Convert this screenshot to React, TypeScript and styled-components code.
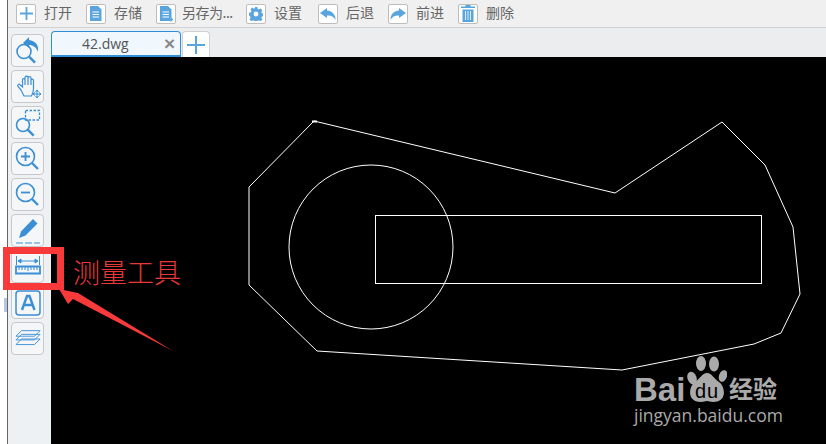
import React from "react";
import styled, { createGlobalStyle } from "styled-components";

const GlobalStyle = createGlobalStyle`
  html, body {
    margin: 0;
    padding: 0;
    background: #fff;
    font-family: "Noto Sans CJK SC", "Liberation Sans", sans-serif;
  }
`;

const BLUE = "#5aa5de";
const SIDE = "#3b8fd6";

const PlusIcon = () => (
  <svg width="13" height="13" viewBox="0 0 13 13">
    <path d="M6.500 0v13M0 6.500h13" stroke={BLUE} strokeWidth="1.800" />
  </svg>
);
const SaveIcon = ({ extra }: { extra?: boolean }) => (
  <svg width="14" height="16" viewBox="0 0 14 16">
    <path d="M1 0h8l3.500 3.500V15H1z" fill={BLUE} />
    <path d="M3.500 6h6.500M3.500 8.500h6.500M3.500 11h6.500" stroke="#fff" strokeWidth="1.200" />
    {extra && <path d="M8 13.500h5.500M11.500 11.500l2 2-2 2" stroke={BLUE} strokeWidth="1.200" fill="#fff" />}
  </svg>
);
const GearIcon = () => (
  <svg width="14" height="14" viewBox="0 0 16 16">
    <path
      d="M6.500 0h3l.4 2.200 1.500.7 1.900-1.200 2 2-1.200 1.900.7 1.500 2.200.4v3l-2.200.4-.7 1.500 1.200 1.900-2 2-1.900-1.200-1.500.7-.4 2.200h-3l-.4-2.200-1.500-.7-1.900 1.200-2-2 1.200-1.900-.7-1.500L0 9.500v-3l2.200-.4.7-1.500L1.700 2.700l2-2 1.900 1.200 1.500-.7z"
      fill={BLUE}
    />
    <circle cx="8" cy="8" r="2.800" fill="#fff" />
  </svg>
);
const BackIcon = ({ flip }: { flip?: boolean }) => (
  <svg width="16" height="12" viewBox="0 0 16 12" style={flip ? { transform: "scaleX(-1)" } : undefined}>
    <path d="M7 0L0 5l7 5V7.500c4-.3 6.500 1 8.500 4.500C15.500 6.500 12.500 3 7 2.500z" fill={BLUE} />
  </svg>
);
const TrashIcon = () => (
  <svg width="14" height="17" viewBox="0 0 14 17">
    <path d="M4.500 0h5v1.500H14V3H0V1.500h4.500z" fill={BLUE} />
    <path d="M1.500 4.500h11V17h-11z" fill={BLUE} />
    <path d="M4.500 6v9M7 6v9M9.500 6v9" stroke="#dcecf8" strokeWidth="1" />
  </svg>
);

const Lens = ({ cx = 11, cy = 15, r = 7 }: { cx?: number; cy?: number; r?: number }) => (
  <>
    <circle cx={cx} cy={cy} r={r} fill="none" stroke={SIDE} strokeWidth="1.600" />
    <path d={`M${cx + r * 0.72} ${cy + r * 0.72}l6 6`} stroke={SIDE} strokeWidth="2.400" />
  </>
);

const sideIcons = [
  <svg width="28" height="28" viewBox="0 0 28 28" key="reset">
    <Lens cx={10} cy={14.500} r={7} />
    <path d="M15 0L9 6l6 5V8c4 0 7 2 9 7 1-8-3-11-9-12z" fill={SIDE} />
  </svg>,
  <svg width="28" height="28" viewBox="0 0 28 28" key="pan">
    <path
      d="M7 17L4 13.500c-1-1.500.8-3 2-1.800L8.500 14V7c0-1.800 2.500-1.800 2.500 0v5V4.500c0-1.800 3-1.800 3 0V12V5c0-1.800 3-1.800 3 0v7V7.500c0-1.800 2.500-1.800 2.500 0V16c0 3-1 5-2 7H10z"
      fill="none"
      stroke={SIDE}
      strokeWidth="1.200"
    />
    <path d="M19 21h8M23 17v8M21 19.500L19 21l2 1.500M25 19.500l2 1.500-2 1.500M21.500 19l1.500-2 1.500 2M21.500 23l1.500 2 1.500-2" fill="none" stroke={SIDE} strokeWidth="1" />
  </svg>,
  <svg width="28" height="28" viewBox="0 0 28 28" key="window">
    <Lens cx={9} cy={16} r={6.500} />
    <rect x="11.500" y="1.500" width="14" height="9.500" fill="none" stroke={SIDE} strokeWidth="1.300" strokeDasharray="2.500 1.500" />
  </svg>,
  <svg width="28" height="28" viewBox="0 0 28 28" key="in">
    <Lens cx={11.500} cy={11.500} r={9} />
    <path d="M7 11.500h9M11.500 7v9" stroke={SIDE} strokeWidth="1.800" />
  </svg>,
  <svg width="28" height="28" viewBox="0 0 28 28" key="out">
    <Lens cx={11.500} cy={11.500} r={9} />
    <path d="M7 11.500h9" stroke={SIDE} strokeWidth="1.800" />
  </svg>,
  <svg width="28" height="28" viewBox="0 0 28 28" key="pen">
    <path d="M19 2l4.500 4.500-12 12L5 21l2-6.500z" fill={SIDE} />
    <path d="M2 26h7M11 26h7M20 26h6" stroke={SIDE} strokeWidth="1.200" />
  </svg>,
  <svg width="26" height="24" viewBox="0 0 26 24" key="ruler">
    <path d="M1.500 1v9M24.500 1v9M3 6h20M3 6l3-2v4zM23 6l-3-2v4z" fill={SIDE} stroke={SIDE} strokeWidth="1" />
    <path d="M1 11.500h24v7H1z" fill="none" stroke={SIDE} strokeWidth="1.800" />
    <path d="M4 12v3M7 12v3M10 12v3M13 12v4M16 12v3M19 12v3M22 12v3" stroke={SIDE} strokeWidth="1" />
  </svg>,
  <svg width="26" height="26" viewBox="0 0 26 26" key="text">
    <rect x="1" y="1" width="24" height="24" rx="3" fill="none" stroke={SIDE} strokeWidth="1.500" />
    <path d="M7 20l5-14h2.500L19.500 20M9 15h8" fill="none" stroke={SIDE} strokeWidth="2.400" />
  </svg>,
  <svg width="26" height="24" viewBox="0 0 28 24" key="layers">
    <path d="M7 3h20l-6 6H1z" fill="none" stroke={SIDE} strokeWidth="1" />
    <path d="M7 7h20l-6 6H1z" fill="none" stroke={SIDE} strokeWidth="1" />
    <path d="M7 12h20l-6 6H1z" fill="none" stroke={SIDE} strokeWidth="1" />
  </svg>,
];

const tools = [
  { icon: <PlusIcon />, label: "打开", width: 56 },
  { icon: <SaveIcon />, label: "存储", width: 56 },
  { icon: <SaveIcon extra />, label: "另存为...", width: 76, tight: true },
  { icon: <GearIcon />, label: "设置", width: 58 },
  { icon: <BackIcon />, label: "后退", width: 56 },
  { icon: <BackIcon flip />, label: "前进", width: 56 },
  { icon: <TrashIcon />, label: "删除", width: 56 },
];

export default function App() {
  return (
    <>
      <GlobalStyle />
      <Page>
        <Gutter />
        <Main>
          <Toolbar>
            {tools.map((t) => (
              <ToolItem key={t.label} $width={t.width} $tight={t.tight}>
                <ToolIcon>{t.icon}</ToolIcon>
                <ToolLabel $tight={t.tight}>{t.label}</ToolLabel>
              </ToolItem>
            ))}
          </Toolbar>
          <Workspace>
            <Sidebar>
              {sideIcons.map((icon) => (
                <SideButton key={icon.key}>{icon}</SideButton>
              ))}
            </Sidebar>
            <Content>
              <TabBar>
                <Tab>
                  <TabTitle>42.dwg</TabTitle>
                  <TabClose>×</TabClose>
                </Tab>
                <AddTab>
                  <svg width="20" height="20" viewBox="0 0 20 20">
                    <path d="M10 1v18M1 10h18" stroke={BLUE} strokeWidth="2" />
                  </svg>
                </AddTab>
              </TabBar>
              <Canvas>
                <svg width="775" height="387" viewBox="51 57 775 387">
                  <g fill="none" stroke="#fff" strokeWidth="1">
                    <path d="M314 121L615 193L722 122L765 165L793 227L800 294L781 333L754 344L622 370L317 351L249 285V187z" />
                    <path d="M312 121.500h5" strokeWidth="2" />
                    <circle cx="371" cy="247" r="82" />
                    <rect x="375.500" y="215.500" width="386" height="68" />
                  </g>
                </svg>
              </Canvas>
            </Content>
          </Workspace>
        </Main>

        <Handle />
        <RedBox />
        <ArrowLayer width="826" height="444" viewBox="0 0 826 444">
          <path d="M59 289L78 293L173 351L73 299L68 304z" fill="#f93a3a" />
        </ArrowLayer>
        <RedLabel>测量工具</RedLabel>

        <Watermark>
          <LogoRow>
            <Bai>Bai</Bai>
            <Paw>
              <svg width="40" height="46" viewBox="0 0 40 46">
                <ellipse cx="5" cy="22" rx="4.500" ry="6.500" fill="#aaa" transform="rotate(-20 5 22)" />
                <ellipse cx="14" cy="7.500" rx="5" ry="7.500" fill="#aaa" />
                <ellipse cx="27" cy="8" rx="5" ry="7.500" fill="#aaa" />
                <ellipse cx="36" cy="20" rx="4" ry="6" fill="#aaa" transform="rotate(20 36 20)" />
                <path d="M20 17c5 0 7 6 12 9 6 4 9 20-6 20-3 0-4-1-6-1s-3 1-6 1c-15 0-12-16-6-20 5-3 7-9 12-9z" fill="#aaa" />
              </svg>
              <Du>du</Du>
            </Paw>
            <Jing>经验</Jing>
          </LogoRow>
          <Domain>jingyan.baidu.com</Domain>
        </Watermark>
      </Page>
    </>
  );
}

const Page = styled.div`
  position: relative;
  display: flex;
  width: 826px;
  height: 444px;
  overflow: hidden;
  background: #fff;
`;

const Gutter = styled.div`
  flex: 0 0 7px;
  border-right: 1px solid #666;
`;

const Main = styled.div`
  flex: 1;
  display: flex;
  flex-direction: column;
  min-width: 0;
`;

const Toolbar = styled.div`
  flex: 0 0 27px;
  display: flex;
  align-items: center;
  gap: 14px;
  padding-left: 8px;
  background: #f0f0f0;
  border-bottom: 1px solid #d2d2d2;
`;

const ToolItem = styled.div<{ $width: number; $tight?: boolean }>`
  display: flex;
  flex: 0 0 ${({ $width }) => $width}px;
  min-width: 0;
  align-items: center;
  gap: ${({ $tight }) => ($tight ? 6 : 8)}px;
`;

const ToolIcon = styled.div`
  flex: none;
  width: 20px;
  height: 20px;
  box-sizing: border-box;
  display: flex;
  align-items: center;
  justify-content: center;
  background: #fff;
  border: 1px solid #bdbdbd;
  border-radius: 2px;
`;

const ToolLabel = styled.span<{ $tight?: boolean }>`
  font-size: 14px;
  line-height: 20px;
  padding-bottom: 3px;
  color: #666;
  white-space: nowrap;
  letter-spacing: ${({ $tight }) => ($tight ? "-0.5px" : "0")};
`;

const Workspace = styled.div`
  flex: 1;
  display: flex;
  min-height: 0;
`;

const Sidebar = styled.div`
  flex: 0 0 43px;
  box-sizing: border-box;
  display: flex;
  flex-direction: column;
  gap: 3px;
  padding: 6px 0 0 3px;
  background: #eef1f4;
`;

const SideButton = styled.div`
  width: 33px;
  height: 33px;
  box-sizing: border-box;
  display: flex;
  align-items: center;
  justify-content: center;
  background: #f5f6f8;
  border: 1px solid #c6c8ca;
  border-radius: 4px;
`;

const Content = styled.div`
  flex: 1;
  display: flex;
  flex-direction: column;
  min-width: 0;
`;

const TabBar = styled.div`
  flex: 0 0 29px;
  box-sizing: border-box;
  display: flex;
  gap: 1px;
  padding-top: 3px;
  background: #ecedef;
`;

const Tab = styled.div`
  width: 130px;
  height: 26px;
  box-sizing: border-box;
  display: flex;
  align-items: center;
  justify-content: space-between;
  padding: 0 5px 0 30px;
  background: #f0f7fd;
  border: 1px solid #2f8fd8;
  border-bottom-width: 2px;
  border-radius: 4px 4px 0 0;
`;

const TabTitle = styled.span`
  font-family: "Open Sans", "Liberation Sans", sans-serif;
  font-size: 14px;
  color: #555;
`;

const TabClose = styled.span`
  font-family: "Liberation Sans", sans-serif;
  font-size: 19px;
  font-weight: 700;
  line-height: 1;
  color: #888;
`;

const AddTab = styled.div`
  width: 28px;
  height: 26px;
  box-sizing: border-box;
  display: flex;
  align-items: center;
  justify-content: center;
  background: #fff;
  border: 1px solid #d0d0d0;
  border-bottom: none;
  border-radius: 4px 4px 0 0;
`;

const Canvas = styled.div`
  flex: 1;
  background: #000;
  line-height: 0;
`;

const Handle = styled.div`
  position: absolute;
  left: 4px;
  top: 298px;
  width: 3px;
  height: 14px;
  background: #b4c8e4;
`;

const RedBox = styled.div`
  position: absolute;
  left: 3px;
  top: 247px;
  width: 61px;
  height: 43px;
  box-sizing: border-box;
  border: 7px solid #f93a3a;
`;

const ArrowLayer = styled.svg`
  position: absolute;
  left: 0;
  top: 0;
  pointer-events: none;
`;

const RedLabel = styled.span`
  position: absolute;
  left: 73px;
  top: 253px;
  font-family: "Noto Sans CJK SC", serif;
  font-size: 27px;
  font-weight: 300;
  line-height: 38px;
  color: #e83838;
  white-space: nowrap;
`;

const Watermark = styled.div`
  position: absolute;
  left: 634px;
  top: 356px;
  display: flex;
  flex-direction: column;
  color: #aaa;
`;

const LogoRow = styled.div`
  display: flex;
  align-items: flex-end;
  height: 46px;
`;

const Bai = styled.span`
  width: 53px;
  font-family: "Liberation Sans", sans-serif;
  font-size: 33px;
  font-weight: 700;
  line-height: 24px;
`;

const Paw = styled.div`
  position: relative;
  width: 40px;
  height: 46px;
  line-height: 0;
`;

const Du = styled.span`
  position: absolute;
  left: 6px;
  top: 25px;
  width: 28px;
  text-align: center;
  font-family: "Liberation Sans", sans-serif;
  font-size: 20px;
  font-weight: 400;
  letter-spacing: 1px;
  line-height: 20px;
  color: #000;
`;

const Jing = styled.span`
  margin: 0 0 2px 2px;
  font-size: 24px;
  font-weight: 700;
  line-height: 24px;
`;

const Domain = styled.span`
  margin-top: 1px;
  font-family: "Open Sans", sans-serif;
  font-size: 17.500px;
  line-height: 24px;
  white-space: nowrap;
`;
